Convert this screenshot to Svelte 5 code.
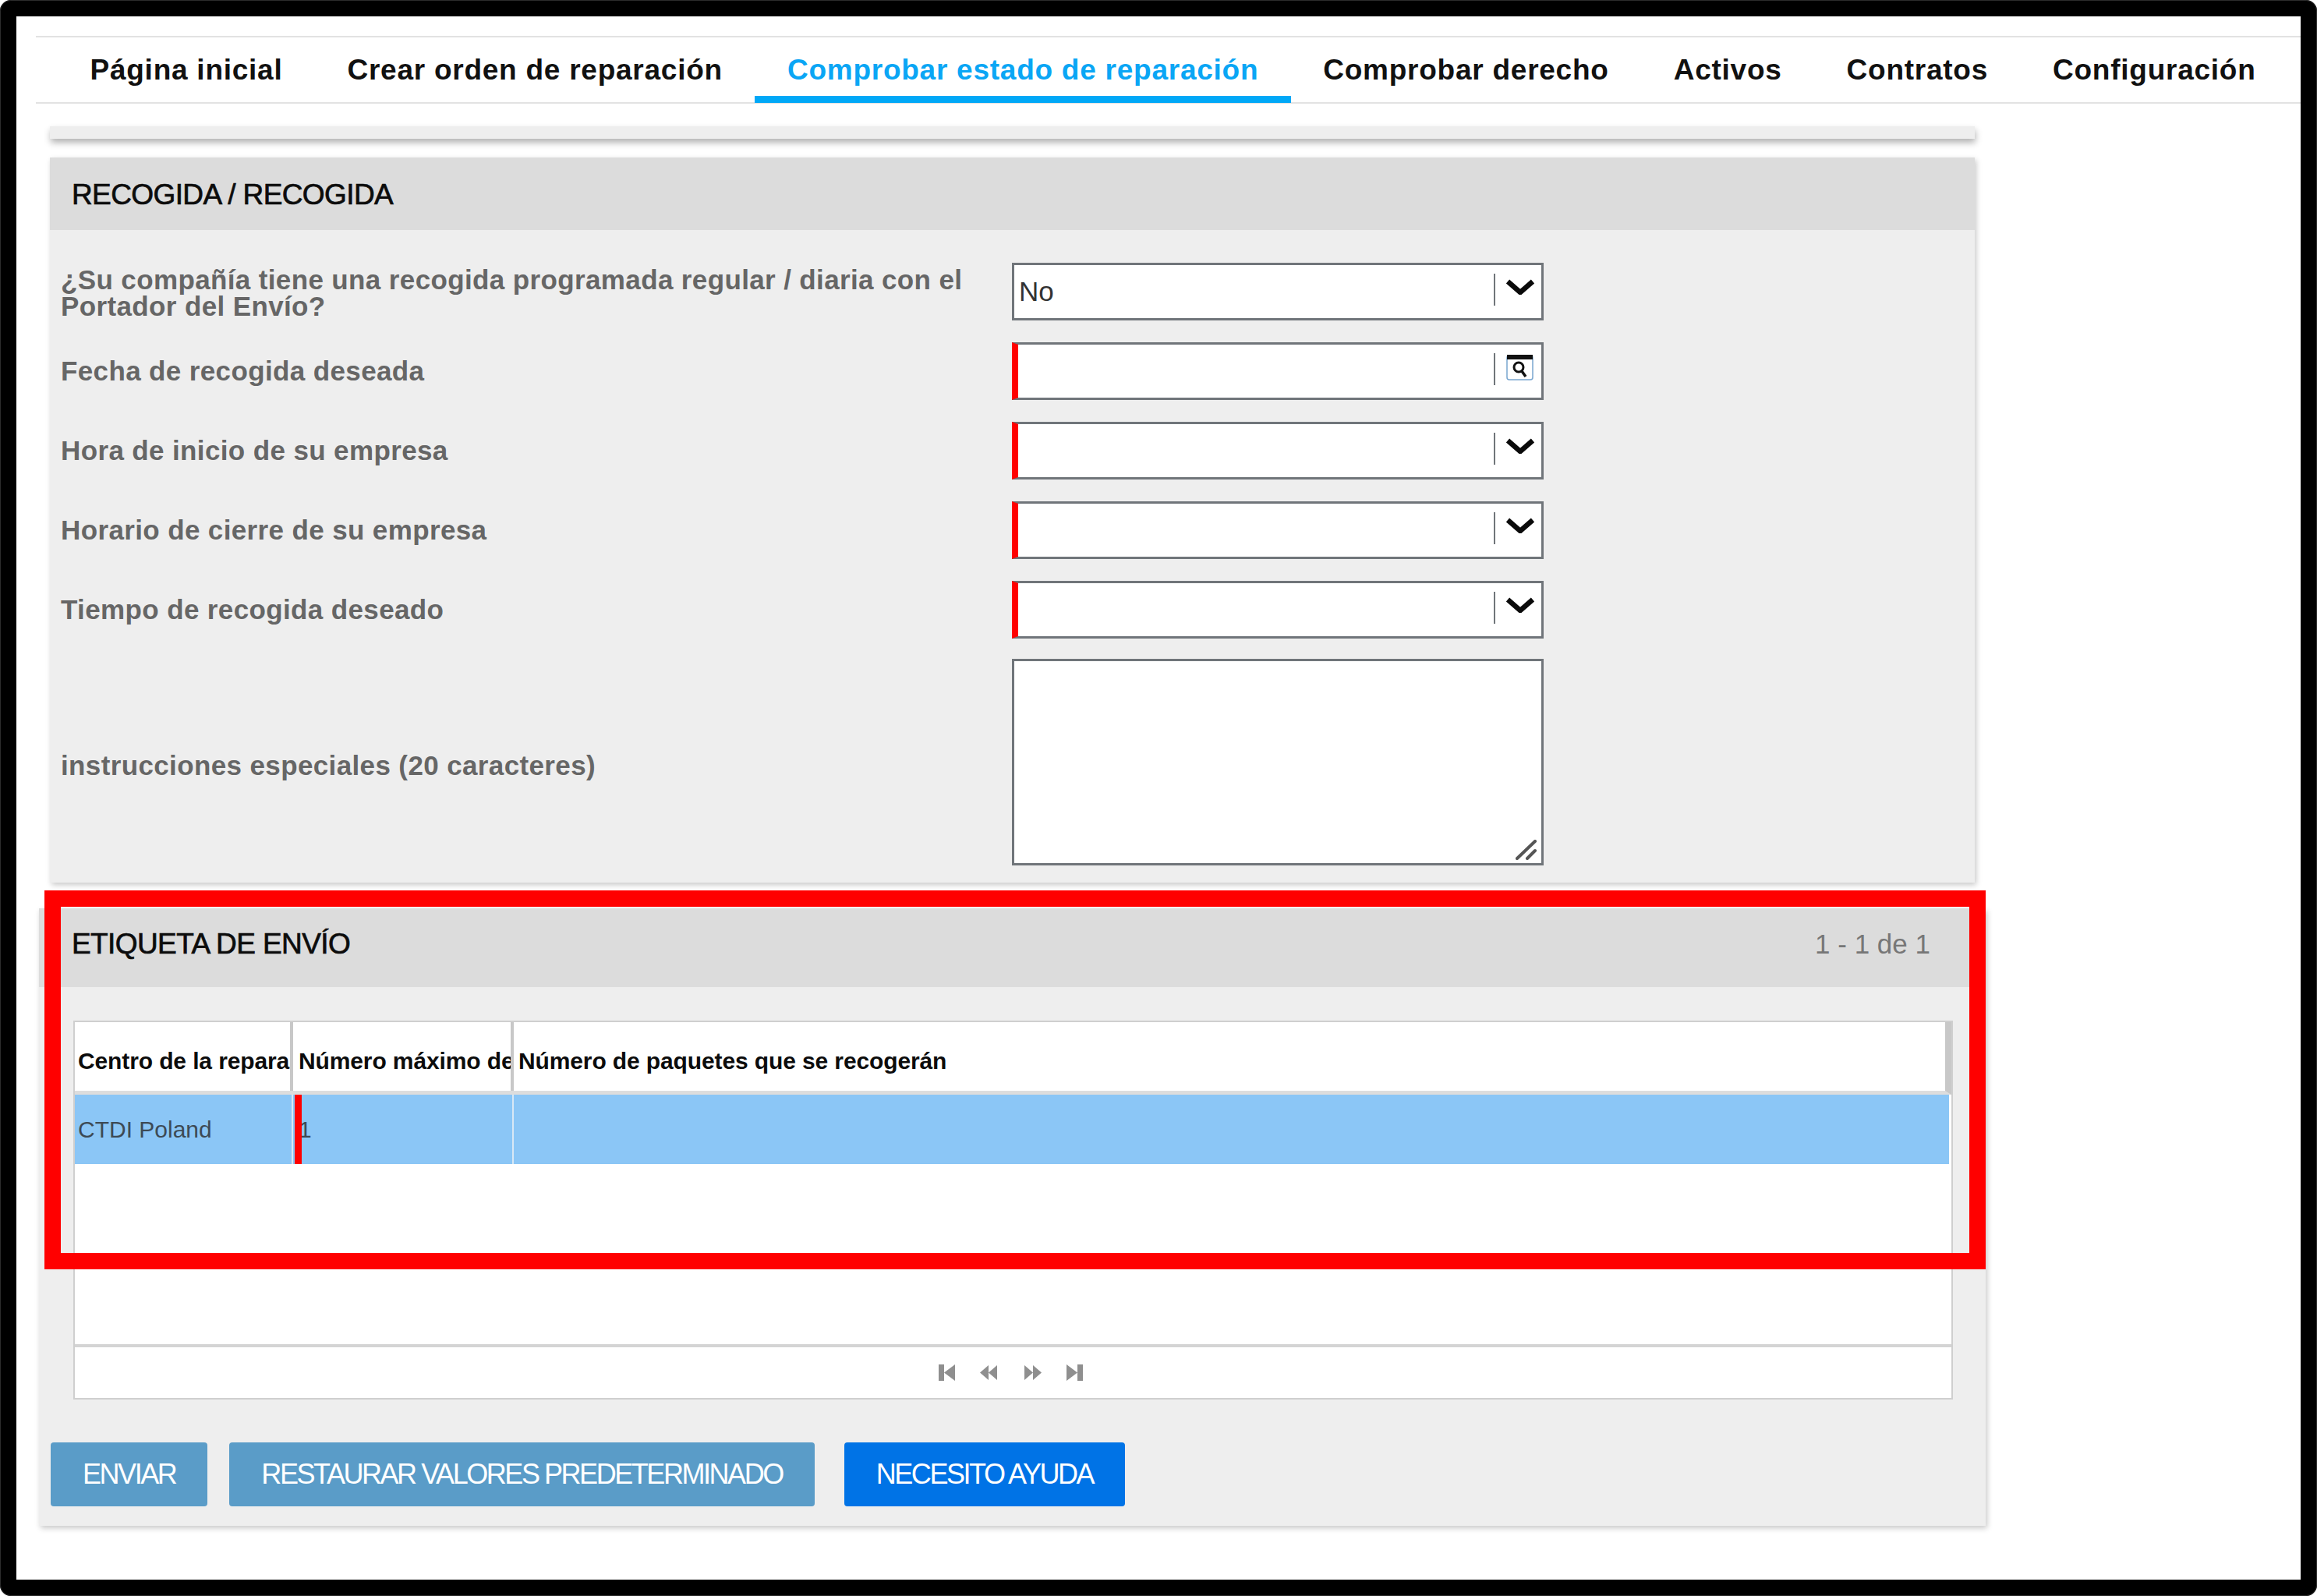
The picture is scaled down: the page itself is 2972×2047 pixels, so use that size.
<script>
  const tabs = ['Página inicial', 'Crear orden de reparación', 'Comprobar estado de reparación', 'Comprobar derecho', 'Activos', 'Contratos', 'Configuración'];
  const fields = [
    { label: 'Fecha de recogida deseada', icon: 'cal' },
    { label: 'Hora de inicio de su empresa', icon: 'chev' },
    { label: 'Horario de cierre de su empresa', icon: 'chev' },
    { label: 'Tiempo de recogida deseado', icon: 'chev' }
  ];
</script>

<div class="page">
  <div class="frame">
    <nav class="nav">
      {#each tabs as t, i}
        <div class="tab" class:active={i === 2}>{t}</div>
      {/each}
    </nav>

    <div class="stub"></div>

    <section class="card pickup">
      <header class="head"><h2>RECOGIDA / RECOGIDA</h2></header>
      <div class="form">
        <div class="row">
          <div class="label two">¿Su compañía tiene una recogida programada regular / diaria con el Portador del Envío?</div>
          <div class="field">
            <span class="value">No</span>
            <span class="sep"></span>
            <svg class="chev" viewBox="0 0 38 20"><path d="M3 3 L19 17 L35 3" fill="none" stroke="#0a0a0a" stroke-width="6.5"/></svg>
          </div>
        </div>
        {#each fields as f}
          <div class="row">
            <div class="label">{f.label}</div>
            <div class="field req">
              <span class="value"></span>
              <span class="sep"></span>
              {#if f.icon === 'chev'}
                <svg class="chev" viewBox="0 0 38 20"><path d="M3 3 L19 17 L35 3" fill="none" stroke="#0a0a0a" stroke-width="6.5"/></svg>
              {:else}
                <svg class="cal" viewBox="0 0 35 33">
                  <rect x="1" y="1" width="33" height="31" rx="3" fill="#fff" stroke="#7aa7d0" stroke-width="1.5"/>
                  <rect x="1" y="0" width="33" height="6" fill="#111"/>
                  <circle cx="16" cy="16" r="6" fill="none" stroke="#111" stroke-width="3"/>
                  <path d="M20 21 L25 28" stroke="#111" stroke-width="3.5"/>
                </svg>
              {/if}
            </div>
          </div>
        {/each}
        <div class="row tall">
          <div class="label">instrucciones especiales (20 caracteres)</div>
          <div class="area">
            <svg class="grip" viewBox="0 0 28 26"><path d="M2 24 L25 2 M15 24 L25 14" stroke="#555" stroke-width="4" stroke-linecap="round"/></svg>
          </div>
        </div>
      </div>
    </section>

    <section class="card label-card">
      <header class="head big"><h2>ETIQUETA DE ENVÍO</h2><span class="count">1 - 1 de 1</span></header>
      <div class="table">
        <div class="thead">
          <div class="th c1">Centro de la repara</div>
          <div class="th c2">Número máximo de</div>
          <div class="th c3">Número de paquetes que se recogerán</div>
        </div>
        <div class="trow">
          <div class="td c1">CTDI Poland</div>
          <div class="td c2"><span class="one">1</span></div>
          <div class="td c3"></div>
        </div>
        <div class="tempty"></div>
        <div class="pager">
          <svg viewBox="0 0 21 21" class="pg"><path d="M0 0h7v21H0zM7 10.5 21 0v21z" fill="#8f8f8f"/></svg>
          <svg viewBox="0 0 22 21" class="pg p2"><path d="M0 10.5 11 1v19zM11 10.5 22 1v19z" fill="#8f8f8f"/></svg>
          <svg viewBox="0 0 22 21" class="pg p3"><path d="M0 1l11 9.5L0 20zM11 1l11 9.5L11 20z" fill="#8f8f8f"/></svg>
          <svg viewBox="0 0 21 21" class="pg p4"><path d="M0 0l14 10.5L0 21zM14 0h7v21h-7z" fill="#8f8f8f"/></svg>
        </div>
      </div>
      <div class="actions">
        <button class="btn muted">ENVIAR</button>
        <button class="btn muted">RESTAURAR VALORES PREDETERMINADO</button>
        <button class="btn help">NECESITO AYUDA</button>
      </div>
    </section>
  </div>
  <div class="highlight"></div>
</div>

<style>
  :global(body) { margin: 0; background: #fff; }
  .page {
    position: relative;
    width: 2972px;
    height: 2047px;
    font-family: "Liberation Sans", Arial, sans-serif;
    overflow: hidden;
    background: #fff;
  }
  .frame {
    box-sizing: border-box;
    width: 2972px;
    height: 2047px;
    border: 21px solid #000;
    border-radius: 14px;
    outline: 1px solid #2c2c2c;
    outline-offset: -1px;
    padding-top: 25px;
    background: #fff;
  }
  .nav {
    display: flex;
    margin-left: 25px;
    padding-left: 28px;
    height: 87px;
    box-sizing: border-box;
    border-top: 2px solid #e2e2e2;
    border-bottom: 2px solid #e2e2e2;
  }
  .tab {
    box-sizing: border-box;
    height: 84px;
    padding: 0 41.5px;
    border-bottom: 9px solid transparent;
    font-size: 37px;
    font-weight: 700;
    line-height: 84px;
    color: #111;
    white-space: nowrap;
    letter-spacing: .75px;
  }
  .tab.active { color: #0aa6f5; border-bottom-color: #00a8f7; }
  .stub {
    margin: 29px 0 0 43px;
    width: 2469px;
    height: 16px;
    background: #eeeeee;
    box-shadow: 1px 5px 8px rgba(0,0,0,.3);
  }
  .card {
    background: #eeeeee;
    box-shadow: 2px 3px 7px rgba(0,0,0,.22);
  }
  .pickup {
    margin: 24px 0 0 43px;
    width: 2469px;
  }
  .head {
    box-sizing: border-box;
    display: flex;
    align-items: center;
    justify-content: space-between;
    height: 93px;
    padding: 2px 28px 0;
    background: #dcdcdc;
  }
  .head h2 {
    margin: 0;
    font-size: 37px;
    font-weight: 400;
    color: #0c0c0c;
    -webkit-text-stroke: .7px #0c0c0c;
    letter-spacing: -.6px;
  }
  .form {
    display: flex;
    flex-direction: column;
    gap: 28px;
    padding: 42px 0 22px 14px;
  }
  .row {
    display: grid;
    grid-template-columns: 1220px 682px;
    align-items: center;
    height: 74px;
  }
  .row.tall { height: 265px; margin-top: -2px; }
  .row.tall .label { padding-top: 8px; }
  .label {
    font-size: 35px;
    font-weight: 700;
    color: #666;
    line-height: 34px;
    letter-spacing: .37px;
  }
  .label.two { width: 1200px; margin-top: 4px; }
  .field {
    box-sizing: border-box;
    height: 74px;
    display: flex;
    align-items: center;
    background: #fff;
    border: 3px solid #70757a;
    position: relative;
  }
  .field.req { border-left: 8px solid #f00; }
  .value {
    flex: 1;
    padding-left: 6px;
    font-size: 35px;
    color: #333;
  }
  .sep {
    width: 2px;
    height: 41px;
    margin-top: -6px;
    background: #70757a;
  }
  .chev { width: 38px; height: 20px; margin: -13px 8px 0 13px; flex: none; }
  .cal { width: 35px; height: 33px; margin: -9px 10px 0 14px; flex: none; }
  .area {
    box-sizing: border-box;
    height: 265px;
    background: #fff;
    border: 3px solid #70757a;
    position: relative;
  }
  .grip { position: absolute; right: 5px; bottom: 4px; width: 28px; height: 26px; }

  .label-card {
    margin: 33px 0 0 29px;
    width: 2497px;
    height: 792px;
  }
  .head.big { height: 101px; padding: 0 71px 9px 42px; }
  .count { font-size: 35px; color: #777; }
  .table {
    box-sizing: border-box;
    margin: 43px 0 0 44px;
    width: 2411px;
    height: 486px;
    background: #fff;
    border: 2px solid #cfcfcf;
    display: flex;
    flex-direction: column;
  }
  .thead {
    display: grid;
    grid-template-columns: 280px 283px 1836px;
    height: 88px;
    border-bottom: 5px solid #dddddd;
    border-right: 8px solid #c8c8c8;
    flex: none;
  }
  .th, .td {
    box-sizing: border-box;
    font-size: 30px;
    overflow: hidden;
    white-space: nowrap;
  }
  .th {
    line-height: 100px;
    font-weight: 700;
    color: #0c0c0c;
    padding-left: 4px;
    letter-spacing: -.12px;
    border-right: 4px solid #c8c8c8;
  }
  .th.c2 { padding-left: 7px; }
  .th.c3 { padding-left: 6px; border-right: 0; }
  .trow {
    display: grid;
    grid-template-columns: 280px 283px 1840px;
    height: 89px;
    background: #8bc6f6;
    margin-right: 3px;
    flex: none;
  }
  .td {
    line-height: 90px;
    color: #3d4a55;
    padding-left: 4px;
    border-right: 2px solid #d8e8f5;
  }
  .td.c2 { padding-left: 0; }
  .td.c3 { border-right: 0; }
  .one {
    position: relative;
    display: block;
    height: 89px;
    padding-left: 7px;
  }
  .one::before {
    content: "";
    position: absolute;
    left: 2px;
    top: 0;
    width: 9px;
    height: 89px;
    background: #f00;
  }
  .tempty { flex: 1; border-bottom: 4px solid #d4d4d4; }
  .pager {
    position: relative;
    flex: none;
    height: 65px;
    display: flex;
    align-items: center;
    padding-left: 1108px;
  }
  .pg { width: 21px; height: 21px; flex: none; }
  .p2 { width: 22px; margin-left: 32px; }
  .p3 { width: 22px; margin-left: 35px; }
  .p4 { margin-left: 32px; }

  .actions {
    display: flex;
    margin: 55px 0 0 15px;
  }
  .btn {
    height: 82px;
    padding: 0 41px;
    border: 0;
    border-radius: 4px;
    color: #fff;
    font-family: inherit;
    font-size: 36px;
    letter-spacing: -2.45px;
    white-space: nowrap;
  }
  .muted { background: #5a9cc8; margin-right: 28px; }
  .help { background: #0073e6; margin-left: 10px; }

  .highlight {
    position: absolute;
    left: 57px;
    top: 1142px;
    width: 2490px;
    height: 486px;
    box-sizing: border-box;
    border: 21px solid #f00;
    pointer-events: none;
  }
</style>
